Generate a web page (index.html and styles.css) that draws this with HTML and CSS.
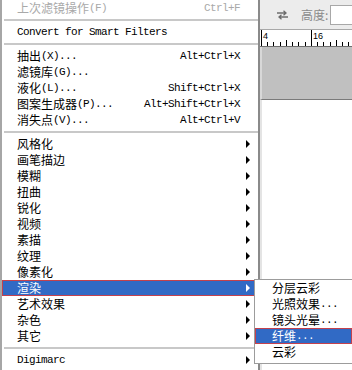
FILE: index.html
```html
<!DOCTYPE html>
<html lang="zh-CN">
<head>
	<meta charset="utf-8">
	<title>滤镜</title>
	<link rel="stylesheet" href="styles.css">
</head>
<body>
	<div class="app">
		<div class="menu">
			<div class="item off">上次滤镜操作<span class="k">(F)</span><span class="sc k">Ctrl+F</span></div>
			<div class="sep"></div>
			<div class="item"><span class="k">Convert for Smart Filters</span></div>
			<div class="sep"></div>
			<div class="item">抽出<span class="k">(X)...</span><span class="sc k">Alt+Ctrl+X</span></div>
			<div class="item">滤镜库<span class="k">(G)...</span></div>
			<div class="item">液化<span class="k">(L)...</span><span class="sc k">Shift+Ctrl+X</span></div>
			<div class="item">图案生成器<span class="k">(P)...</span><span class="sc k">Alt+Shift+Ctrl+X</span></div>
			<div class="item">消失点<span class="k">(V)...</span><span class="sc k">Alt+Ctrl+V</span></div>
			<div class="sep"></div>
			<div class="item sub">风格化</div>
			<div class="item sub">画笔描边</div>
			<div class="item sub">模糊</div>
			<div class="item sub">扭曲</div>
			<div class="item sub">锐化</div>
			<div class="item sub">视频</div>
			<div class="item sub">素描</div>
			<div class="item sub">纹理</div>
			<div class="item sub">像素化</div>
			<div class="item sub on">渲染
				<div class="submenu">
					<div class="item">分层云彩</div>
					<div class="item">光照效果<span class="k">...</span></div>
					<div class="item">镜头光晕<span class="k">...</span></div>
					<div class="item on">纤维<span class="k">...</span></div>
					<div class="item">云彩</div>
				</div>
			</div>
			<div class="item sub">艺术效果</div>
			<div class="item sub">杂色</div>
			<div class="item sub">其它</div>
			<div class="sep"></div>
			<div class="item sub"><span class="k">Digimarc</span></div>
		</div>
		<div class="work">
			<div class="toolbar">
				<svg class="swap" width="11" height="10" viewBox="0 0 11 10">
					<path d="M0 3h8.5M6.5 0.8l2.5 2.2-2.5 2.2" fill="none" stroke="#6d6d6d" stroke-width="1.3"/>
					<path d="M11 7h-8.5M4.5 4.8l-2.5 2.2 2.5 2.2" fill="none" stroke="#6d6d6d" stroke-width="1.3"/>
				</svg>
				<span class="label">高度:</span>
				<span class="field"></span>
			</div>
			<div class="ruler">
				<svg width="92" height="16" viewBox="0 0 92 16">
					<g stroke="#000" stroke-width="1">
						<path d="M1.5 0v16M51.5 0v16"/>
						<path d="M7.5 12v4M13.5 12v4M20.5 12v4M26.5 10v6M32.5 12v4M38.5 12v4M45.5 12v4"/>
						<path d="M57.5 12v4M63.5 12v4M70.5 12v4M76.5 10v6M82.5 12v4M88.5 12v4"/>
					</g>
					<text x="3" y="9">4</text>
					<text x="53" y="9">16</text>
				</svg>
			</div>
			<div class="canvas"></div>
			<div class="blank"></div>
		</div>
	</div>
</body>
</html>
```

FILE: styles.css
```css
html, body {
	margin: 0;
	height: 100%;
	overflow: hidden;
	background: #fff;
}
.app {
	display: flex;
	height: 100%;
	font-family: "Noto Sans CJK SC", sans-serif;
	font-size: 12px;
	color: #000;
}
.menu {
	width: 256px;
	flex: none;
	background: #fff;
	border-left: 2px solid #a6a6a6;
	border-right: 2px solid #8a8a8a;
}
.item {
	position: relative;
	display: flex;
	align-items: center;
	height: 16px;
	line-height: 16px;
	padding: 0 18px 0 15px;
	white-space: nowrap;
}
.k {
	font-family: "Liberation Mono", monospace;
	font-size: 11px;
	letter-spacing: -0.6px;
}
.sc {
	margin-left: auto;
}
.off {
	color: #a9a9a9;
}
.sub::after {
	content: "";
	margin-left: auto;
	margin-right: -10px;
	border-left: 4px solid #000;
	border-top: 4px solid transparent;
	border-bottom: 4px solid transparent;
}
.on {
	background: #316ac5;
	color: #fff;
	box-shadow: inset 0 0 0 1px #c4414d;
}
.sub.on::after {
	border-left-color: #fff;
}
.sep {
	height: 2px;
	margin: 3px 0 3px 2px;
	background: #c8c8c8;
}
.submenu {
	/* flyout attached to the highlighted row, cut by the window edge */
	position: absolute;
	left: 252px;
	top: -1px;
	width: 97px;
	padding: 0 0 3px;
	background: #fff;
	border: 1px solid #9c9c9c;
	border-right: none;
	color: #000;
}
.submenu .item {
	padding: 0 0 0 17px;
}
.submenu .on {
	color: #fff;
}
.work {
	flex: 1;
	display: flex;
	flex-direction: column;
	min-width: 0;
}
.toolbar {
	height: 29px;
	flex: none;
	display: flex;
	align-items: center;
	padding-left: 17px;
	background: #ececec;
	border-bottom: 1px solid #a8a8a8;
}
.label {
	margin-left: 13px;
	color: #8a8a8a;
}
.field {
	flex: 1;
	height: 18px;
	margin-left: 2px;
	background: #fff;
	border: 1px solid #a8a8a8;
	border-right: none;
}
.ruler {
	height: 16px;
	flex: none;
	background: #fff;
	border-bottom: 1px solid #6e6e6e;
}
.ruler svg {
	display: block;
}
.ruler text {
	font-family: "Liberation Sans", sans-serif;
	font-size: 9px;
	fill: #000;
}
.canvas {
	height: 52px;
	flex: none;
	background: #c0c0c0;
	border-left: 2px solid #d8d8d8;
	border-bottom: 1px solid #7a7a7a;
}
.blank {
	flex: 1;
	background: #fff;
	border-left: 2px solid #e4e4e4;
}
```
